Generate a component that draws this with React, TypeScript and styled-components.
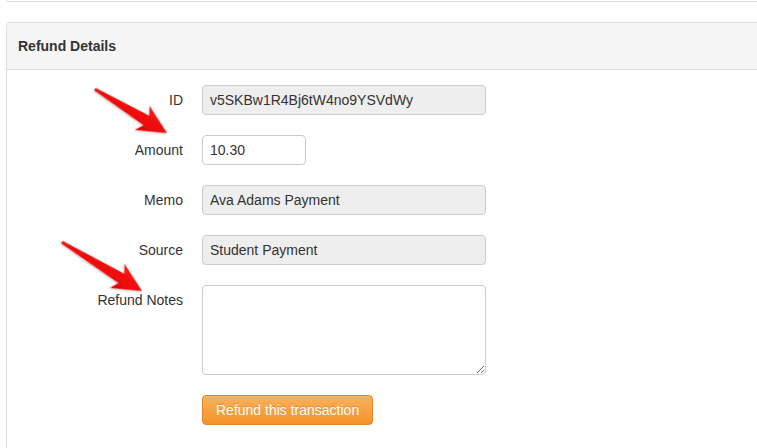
import React from 'react';
import styled, { createGlobalStyle } from 'styled-components';

const GlobalStyle = createGlobalStyle`
  html, body {
    margin: 0;
    padding: 0;
    background: #fff;
    overflow: hidden;
  }
  body {
    font-family: 'Liberation Sans', Arial, sans-serif;
    color: #333;
  }
`;

const Page = styled.div`
  position: relative;
  width: 757px;
  height: 448px;
  padding-left: 6px;
  box-sizing: border-box;
  overflow: hidden;
`;

const PrevPanel = styled.div`
  height: 1px;
  margin-right: -30px;
  border: 1px solid #ddd;
  border-top: none;
  border-radius: 0 0 4px 4px;
`;

const Panel = styled.section`
  margin-top: 20px;
  margin-right: -30px;
  border: 1px solid #ddd;
  border-radius: 4px;
  background: #fff;
`;

const PanelHeading = styled.div`
  height: 46px;
  padding: 0 11px;
  display: flex;
  align-items: center;
  background: #f5f5f5;
  border-bottom: 1px solid #ddd;
  border-radius: 3px 3px 0 0;

  h3 {
    margin: 0;
    font-size: 14px;
    font-weight: bold;
    color: #333;
  }
`;

const PanelBody = styled.div`
  padding: 15px 0 40px;
`;

const FormRow = styled.div`
  display: grid;
  grid-template-columns: 176px 1fr;
  column-gap: 19px;
  margin-bottom: 20px;
`;

const Label = styled.label`
  text-align: right;
  font-size: 14px;
  line-height: 30px;
  color: #333;
`;

const TextInput = styled.input<{ $width?: number }>`
  box-sizing: border-box;
  width: ${p => p.$width || 284}px;
  height: 30px;
  padding: 0 7px;
  font-family: 'Liberation Sans', Arial, sans-serif;
  font-size: 14px;
  color: #333;
  border: 1px solid #ccc;
  border-radius: 4px;
  background: #fff;
  outline: none;

  &:read-only {
    background: #eee;
  }
`;

const NotesArea = styled.textarea`
  box-sizing: border-box;
  width: 284px;
  height: 90px;
  padding: 6px 7px;
  font-family: 'Liberation Sans', Arial, sans-serif;
  font-size: 14px;
  border: 1px solid #ccc;
  border-radius: 4px;
  outline: none;
  display: block;
`;

const WarningButton = styled.button`
  box-sizing: border-box;
  height: 30px;
  padding: 0 13px;
  font-family: 'Liberation Sans', Arial, sans-serif;
  font-size: 14px;
  color: #fff;
  text-shadow: 0 -1px 0 rgba(0, 0, 0, 0.15);
  background: linear-gradient(to bottom, #f9b15d, #f3932a);
  border: 1px solid #e0892a;
  border-radius: 4px;
  cursor: pointer;
`;

const Annotations = styled.svg`
  position: absolute;
  left: 0;
  top: 0;
  pointer-events: none;
`;

type ArrowProps = {
  x1: number,
  y1: number,
  x2: number,
  y2: number,
};

const RedArrow = ({ x1, y1, x2, y2 }: ArrowProps) => {
  const len = Math.hypot(x2 - x1, y2 - y1);
  const angle = Math.atan2(y2 - y1, x2 - x1) * 180 / Math.PI;
  const h = len - 24;
  return (
    <g transform={`translate(${x1} ${y1}) rotate(${angle})`} filter='url(#arrowShadow)'>
      <polygon
        points={`0,-1.2 ${h},-5.5 ${h - 5},-14 ${len},0 ${h - 5},14 ${h},5.5 0,1.5`}
        fill='url(#arrowFill)'
      />
    </g>
  );
};

const fields = [
  { label: 'ID', value: 'v5SKBw1R4Bj6tW4no9YSVdWy', readOnly: true },
  { label: 'Amount', value: '10.30', readOnly: false, width: 104 },
  { label: 'Memo', value: 'Ava Adams Payment', readOnly: true },
  { label: 'Source', value: 'Student Payment', readOnly: true },
];

const App = () => (
  <Page>
    <GlobalStyle />
    <PrevPanel />
    <Panel>
      <PanelHeading>
        <h3>Refund Details</h3>
      </PanelHeading>
      <PanelBody>
        {fields.map(f => (
          <FormRow key={f.label}>
            <Label>{f.label}</Label>
            <div>
              <TextInput defaultValue={f.value} readOnly={f.readOnly} $width={f.width} />
            </div>
          </FormRow>
        ))}
        <FormRow>
          <Label>Refund Notes</Label>
          <div>
            <NotesArea />
          </div>
        </FormRow>
        <FormRow>
          <span />
          <div>
            <WarningButton>Refund this transaction</WarningButton>
          </div>
        </FormRow>
      </PanelBody>
    </Panel>
    <Annotations width='757' height='448'>
      <defs>
        <linearGradient id='arrowFill' x1='0' y1='0' x2='0' y2='1'>
          <stop offset='0' stopColor='#ff1a1a' />
          <stop offset='1' stopColor='#e00000' />
        </linearGradient>
        <filter id='arrowShadow' x='-20%' y='-50%' width='140%' height='200%'>
          <feDropShadow dx='0' dy='1' stdDeviation='0.8' floodColor='#000' floodOpacity='0.3' />
        </filter>
      </defs>
      <RedArrow x1={95} y1={89} x2={167} y2={133} />
      <RedArrow x1={62} y1={242} x2={142} y2={291} />
    </Annotations>
  </Page>
);

export default App;
